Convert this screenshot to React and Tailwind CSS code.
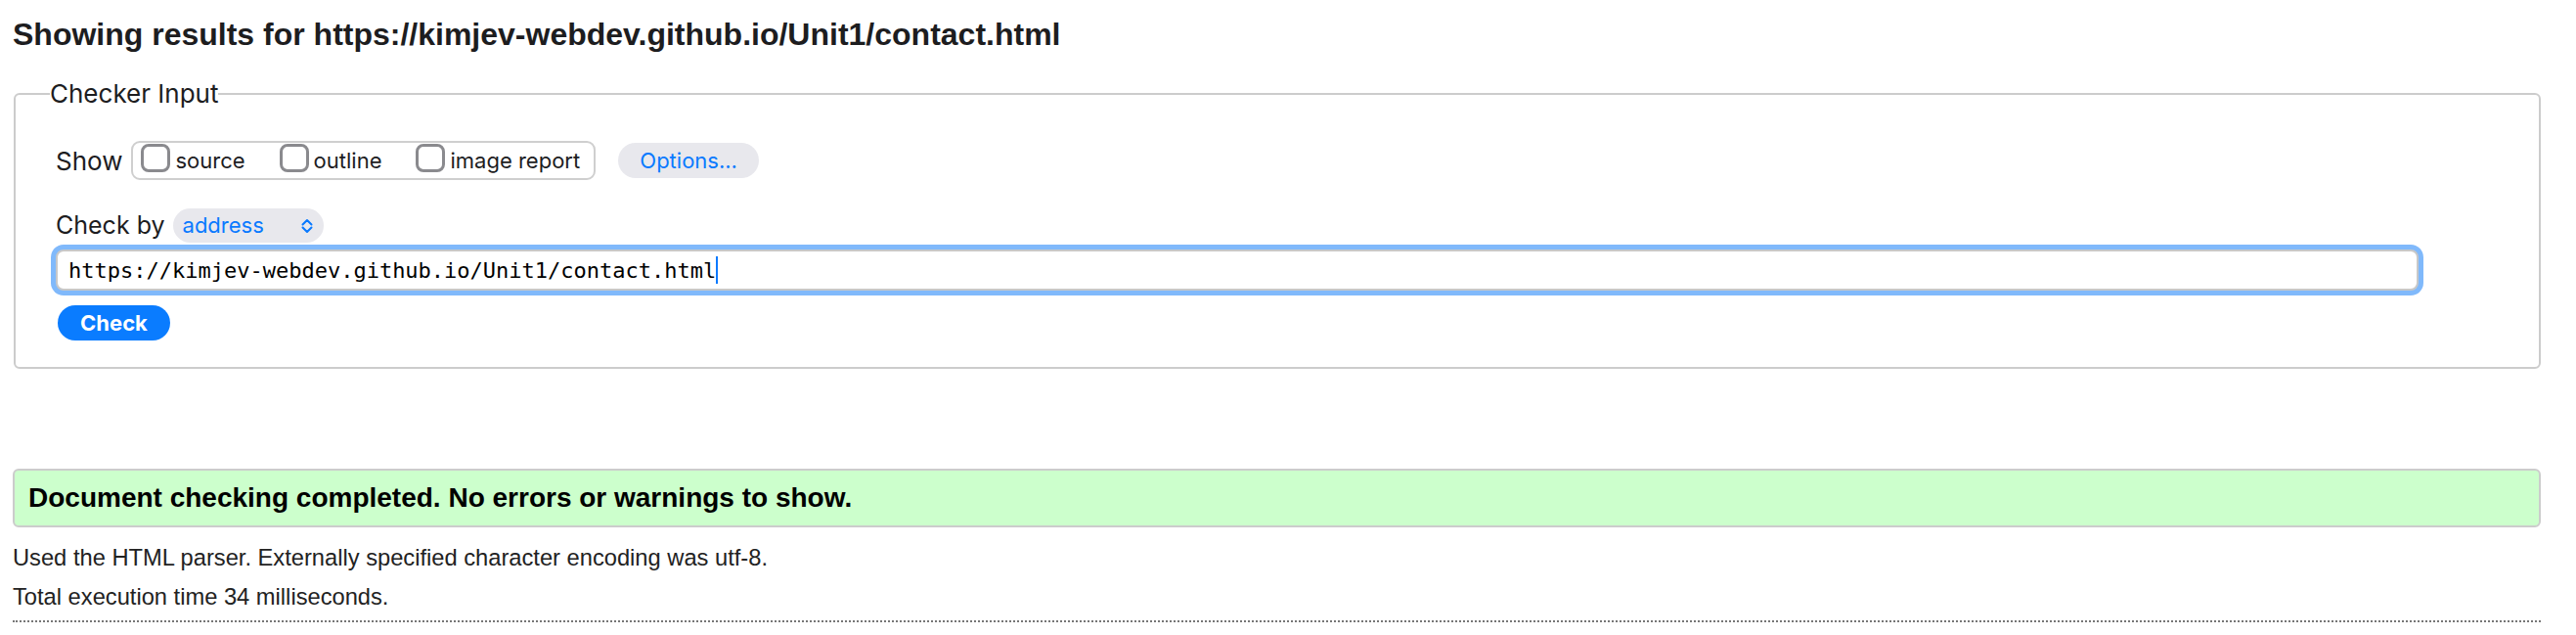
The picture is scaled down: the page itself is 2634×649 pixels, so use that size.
export default function App() {
  const items = ["source", "outline", "image report"];
  return (
    <div className="min-h-[649px] w-[2634px] bg-white pl-[13px] pr-[36px] font-['Liberation_Sans',Arial,sans-serif] text-[#222]">
      <h2 className="pt-[17px] text-[32px] font-bold leading-[36px] text-[#1d1d1f]">
        Showing results for https://kimjev-webdev.github.io/Unit1/contact.html
      </h2>

      <fieldset className="ml-[1px] mt-[28px] rounded-[6px] border-2 border-[#cccccc] pb-[27px] pl-[35px] pr-[123px] font-['Inter',sans-serif] text-[#1d1d1f]">
        <legend className="text-[26px] leading-[30px]">Checker Input</legend>

        <div className="ml-[6px] mt-[33px] flex h-[40px] items-center">
          <span className="text-[26px]">Show</span>
          <div className="ml-[9px] flex h-[40px] items-center rounded-[9px] border-2 border-[#cfcfcf] pl-[8px] pr-[14px] text-[22px]">
            {items.map((label, i) => (
              <span key={label} className={i === 0 ? "flex items-center" : "ml-[35px] flex items-center"}>
                <span className="mb-[5px] h-[29px] w-[30px] rounded-[8px] border-[3px] border-[#8a8a8e] bg-white" />
                <span className="ml-[5px]">{label}</span>
              </span>
            ))}
          </div>
          <button className="ml-[23px] flex h-[36px] w-[144px] items-center justify-center rounded-full bg-[#e8e8ed] text-[22px] text-[#0a7aff]">
            Options...
          </button>
        </div>

        <div className="ml-[6px] mt-[29px] flex h-[35px] items-center">
          <span className="text-[25px]">Check by</span>
          <div className="ml-[8px] flex h-[35px] w-[154px] items-center justify-between rounded-full bg-[#e8e8ed] pl-[10px] pr-[9px] text-[22px] text-[#0a7aff]">
            <span>address</span>
            <svg width="16" height="16" viewBox="0 0 16 16" fill="none" stroke="#0a7aff" strokeWidth="2" strokeLinecap="round" strokeLinejoin="round">
              <path d="M3.5 6.5 L8 2 L12.5 6.5" />
              <path d="M3.5 9.5 L8 14 L12.5 9.5" />
            </svg>
          </div>
        </div>

        <div className="ml-[6px] mt-[7px] flex h-[42px] items-center rounded-[8px] border-2 border-[#c8c8c8] bg-white pl-[11px] font-['DejaVu_Sans_Mono',monospace] text-[22px] text-black shadow-[0_0_0_5px_#80b9fb]">
          <span>https://kimjev-webdev.github.io/Unit1/contact.html</span>
          <span className="h-[28px] w-[2px] bg-[#0a7aff]" />
        </div>

        <button className="ml-[8px] mt-[15px] flex h-[36px] w-[115px] items-center justify-center rounded-full bg-[#0a7cff] text-[22px] font-bold text-white">
          Check
        </button>
      </fieldset>

      <div className="mt-[102px] flex h-[60px] items-center rounded-[6px] border-2 border-[#cccccc] bg-[#ccffcc] pl-[14px] text-[28px] font-bold text-black">
        Document checking completed. No errors or warnings to show.
      </div>

      <p className="mt-[11px] text-[23.7px] leading-[40px]">
        Used the HTML parser. Externally specified character encoding was utf-8.
      </p>
      <p className="text-[23.7px] leading-[40px]">Total execution time 34 milliseconds.</p>
      <div className="mt-[4px] border-t-2 border-dotted border-[#777]" />
    </div>
  );
}
